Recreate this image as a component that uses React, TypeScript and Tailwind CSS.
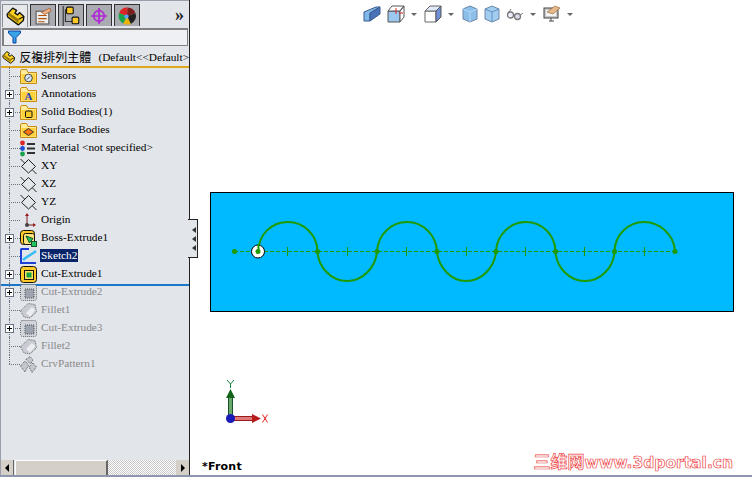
import type { ReactNode } from 'react'

const MONO = "font-['Liberation_Serif','Noto_Sans_CJK_TC',serif]"

// Yellow folder used by most tree rows
function Folder({ children }: { children?: ReactNode }) {
  return (
    <svg width="17" height="17" viewBox="0 0 17 17">
      <path d="M0.5 3 L0.5 15.5 L16.5 15.5 L16.5 4.5 L8 4.5 L6.5 1.5 L1.5 1.5 Z" fill="#ffeb99" stroke="#c98a10" />
      <path d="M1.5 6 H15.5 V14.5 H1.5 Z" fill="#ffd23c" />
      {children}
    </svg>
  )
}

function PartIcon({ size = 17 }: { size?: number }) {
  return (
    <svg width={size} height={size} viewBox="0 0 17 17">
      <path d="M1 6.5 L6 1 L9.5 3 L8 5.5 L10.5 7 L12 5 L16 8.5 L15.5 12 L11 16 L1.5 9 Z" fill="#ffd21f" stroke="#111" strokeWidth="1.2" strokeLinejoin="round" />
      <path d="M1.5 7 L11 14.5 L11.5 11 L2.5 5 Z" fill="#9a7a08" />
      <path d="M11.5 11 L16 8.5" stroke="#111" />
    </svg>
  )
}

function PlaneIcon() {
  return (
    <svg width="17" height="17" viewBox="0 0 17 17">
      <path d="M8.5 1.5 L15.5 8.5 L8.5 15 L1.5 8.5 Z M0.5 1 L4.5 5 M12.5 12 L16.5 16" fill="none" stroke="#222" />
    </svg>
  )
}

function FadedIcon({ kind }: { kind: 'cut' | 'fillet' | 'pattern' }) {
  if (kind === 'cut') {
    return (
      <svg width="17" height="17" viewBox="0 0 17 17">
        <rect x="0.5" y="0.5" width="16" height="16" rx="2" fill="#d1d5db" stroke="#666" strokeDasharray="1 1" />
        <rect x="5" y="5" width="9" height="9" fill="#9ca3af" stroke="#555" strokeDasharray="1 1" />
      </svg>
    )
  }
  if (kind === 'fillet') {
    return (
      <svg width="17" height="17" viewBox="0 0 17 17">
        <path d="M0.5 9 L8 1.5 L15 2.5 L16.5 10 L10 16 L4 15 Z" fill="#c9ccd2" stroke="#666" strokeDasharray="1 1" />
        <path d="M6 11 L12 5 L15.5 8 L10 14.5 Z" fill="#eceef1" />
      </svg>
    )
  }
  return (
    <svg width="17" height="17" viewBox="0 0 17 17">
      <path d="M0.5 10 L5 5 L8.5 9 L5 16 Z M6 3.5 L10 0.5 L13 4 L10.5 8 Z M9 11 L13 7 L16.5 11 L12 16.5 Z" fill="#c4c8ce" stroke="#555" strokeDasharray="1 1" />
    </svg>
  )
}

type Row = { label: string; icon: ReactNode; plus?: boolean; faded?: boolean; selected?: boolean }

const rowsAbove: Row[] = [
  { label: 'Sensors', icon: <Folder><circle cx="8.5" cy="10" r="3.8" fill="#dbeafe" stroke="#444" /><path d="M7 11.5 L10 8.5" stroke="#333" /></Folder> },
  { label: 'Annotations', plus: true, icon: <Folder><text x="8.5" y="14" textAnchor="middle" fontSize="11" fontWeight="700" fill="#1d3fbf" fontFamily="Liberation Serif">A</text></Folder> },
  { label: 'Solid Bodies(1)', plus: true, icon: <Folder><rect x="5.5" y="7" width="6.5" height="6.5" rx="1" fill="#ffc928" stroke="#111" /></Folder> },
  { label: 'Surface Bodies', icon: <Folder><path d="M3.5 10 L8.5 6.5 L13.5 10 L8.5 13.5 Z" fill="#f97316" stroke="#333" /></Folder> },
  {
    label: 'Material <not specified>',
    icon: (
      <svg width="17" height="17" viewBox="0 0 17 17">
        <circle cx="2.5" cy="3" r="2.4" fill="#dc2626" />
        <circle cx="2.5" cy="8.5" r="2.4" fill="#1d4ed8" />
        <circle cx="2.5" cy="14" r="2.4" fill="#16a34a" />
        <path d="M7 4 H15 M7 8.5 H15 M7 13 H15" stroke="#333" strokeWidth="2" />
      </svg>
    ),
  },
  { label: 'XY', icon: <PlaneIcon /> },
  { label: 'XZ', icon: <PlaneIcon /> },
  { label: 'YZ', icon: <PlaneIcon /> },
  {
    label: 'Origin',
    icon: (
      <svg width="17" height="17" viewBox="0 0 17 17">
        <path d="M7 13 V3 M7 13 H15" stroke="#7f1d1d" />
        <path d="M5 4 L7 1 L9 4 Z M13 11 L16 13 L13 15 Z" fill="#991b1b" />
        <circle cx="7" cy="13" r="2" fill="#444" />
      </svg>
    ),
  },
  {
    label: 'Boss-Extrude1',
    plus: true,
    icon: (
      <svg width="17" height="17" viewBox="0 0 17 17">
        <rect x="0.5" y="0.5" width="14" height="14" rx="3" fill="#ffc928" stroke="#111" />
        <rect x="3.5" y="3.5" width="11" height="11" rx="2" fill="#ffe27a" stroke="#111" />
        <path d="M6 6 L13 8.5 L9.5 13 Z" fill="#22c55e" stroke="#14532d" />
        <rect x="11.5" y="11.5" width="5" height="5" fill="#22c55e" stroke="#14532d" />
      </svg>
    ),
  },
  {
    label: 'Sketch2',
    selected: true,
    icon: (
      <svg width="17" height="17" viewBox="0 0 17 17">
        <path d="M0.5 1 H9" stroke="#1d3fd8" strokeWidth="2" />
        <path d="M1 1 V15 H16" fill="none" stroke="#1d3fd8" strokeWidth="2" />
        <path d="M3 12 C6 9 11 7 16 3" fill="none" stroke="#38bdf8" strokeWidth="2.5" />
      </svg>
    ),
  },
  {
    label: 'Cut-Extrude1',
    plus: true,
    icon: (
      <svg width="17" height="17" viewBox="0 0 17 17">
        <rect x="0.5" y="0.5" width="16" height="16" rx="3" fill="#ffc928" stroke="#111" />
        <rect x="4.5" y="4.5" width="9" height="9" fill="#ffe25a" stroke="#111" />
        <rect x="6.5" y="6.5" width="5" height="5" fill="#16a34a" />
      </svg>
    ),
  },
]

const rowsBelow: Row[] = [
  { label: 'Cut-Extrude2', plus: true, faded: true, icon: <FadedIcon kind="cut" /> },
  { label: 'Fillet1', faded: true, icon: <FadedIcon kind="fillet" /> },
  { label: 'Cut-Extrude3', plus: true, faded: true, icon: <FadedIcon kind="cut" /> },
  { label: 'Fillet2', faded: true, icon: <FadedIcon kind="fillet" /> },
  { label: 'CrvPattern1', faded: true, icon: <FadedIcon kind="pattern" /> },
]

function TreeRow({ row, last }: { row: Row; last?: boolean }) {
  return (
    <div className="relative flex h-[18px] items-center pl-[19px]">
      {/* dotted tree guides */}
      <span className={`absolute left-[8px] top-0 w-0 border-l border-dotted border-gray-500 ${last ? 'h-[9px]' : 'h-[18px]'}`} />
      <span className="absolute left-[8px] top-[9px] h-0 w-[11px] border-t border-dotted border-gray-500" />
      {row.plus && (
        <span className="absolute left-[4px] top-[5px] flex h-[9px] w-[9px] items-center justify-center border border-gray-500 bg-white text-black">
          <span className="absolute h-px w-[5px] bg-black" />
          <span className="absolute h-[5px] w-px bg-black" />
        </span>
      )}
      <span className="flex w-[17px] shrink-0 items-center justify-center">{row.icon}</span>
      <span
        className={`ml-[3px] mb-px px-px text-[11.3px] leading-[13px] whitespace-nowrap ${
          row.selected ? 'bg-[#0a246a] text-white' : row.faded ? 'text-[#8a8a8a]' : 'text-black'
        }`}
      >
        {row.label}
      </span>
    </div>
  )
}

function Tab({ active, children }: { active?: boolean; children: ReactNode }) {
  return (
    <div
      className={`flex w-[26px] items-center justify-center border border-b-0 ${
        active ? 'h-[23px] border-[#8a8d94] bg-[#e6e8ec]' : 'h-[22px] border-[#333] bg-[#a9abb0]'
      }`}
    >
      {children}
    </div>
  )
}

function Sidebar() {
  return (
    <aside className="relative flex h-full w-[190px] shrink-0 flex-col border-l border-r border-l-[#9a9eaa] border-r-[#222] bg-[#e2e5ea]">
      <div className="flex h-[28px] items-start gap-[2px] border-t border-[#9a9eaa] pt-[3px] pl-px">
        <Tab active><PartIcon size={19} /></Tab>
        <Tab>
          <svg width="18" height="18" viewBox="0 0 17 17">
            <rect x="2" y="4" width="12" height="12" fill="#eee" stroke="#555" />
            <path d="M4 8 H12 M4 11 H12 M4 14 H10" stroke="#b45309" />
            <path d="M7 5 L15 1 L16 4 L10 7 Z" fill="#f2b488" stroke="#92400e" strokeWidth="0.6" />
          </svg>
        </Tab>
        <Tab>
          <svg width="20" height="20" viewBox="0 0 18 18">
            <path d="M2 0 V18 M4 3 V14 H10" fill="none" stroke="#333" />
            <rect x="5" y="1" width="6" height="6" rx="1" fill="#ffc928" stroke="#111" />
            <rect x="10" y="10" width="6" height="6" rx="1" fill="#ffc928" stroke="#111" />
          </svg>
        </Tab>
        <Tab>
          <svg width="18" height="18" viewBox="0 0 17 17">
            <circle cx="8.5" cy="8.5" r="5" fill="none" stroke="#b026d6" strokeWidth="1.6" />
            <path d="M8.5 1 V16 M1 8.5 H16" stroke="#b026d6" strokeWidth="1.6" />
          </svg>
        </Tab>
        <Tab>
          <svg width="18" height="18" viewBox="0 0 17 17">
            <path d="M8.5 8.5 L1 6 A8 8 0 0 1 9 0.5 Z" fill="#dc2626" />
            <path d="M8.5 8.5 L9 0.5 A8 8 0 0 1 16.5 6 Z" fill="#7f1d1d" />
            <path d="M8.5 8.5 L16.5 6 A8 8 0 0 1 12 16 Z" fill="#222" />
            <path d="M8.5 8.5 L12 16 A8 8 0 0 1 5 15.5 Z" fill="#eab308" />
            <path d="M8.5 8.5 L5 15.5 A8 8 0 0 1 1 6 Z" fill="#16a34a" />
            <circle cx="8" cy="9" r="2" fill="#60a5fa" />
          </svg>
        </Tab>
        <span className="ml-auto mr-[5px] mt-[1px] text-[18px] leading-[20px] font-bold text-[#222]">»</span>
      </div>

      <div className="mx-px flex h-[18px] items-center border border-[#808080] bg-[#eef0f3] pl-[5px] shadow-[inset_1px_1px_0_#808080]">
        <svg width="13" height="14" viewBox="0 0 13 14">
          <path d="M0.5 1 H12.5 V3 L8 7.5 V13 H5 V7.5 L0.5 3 Z" fill="#38a4e8" stroke="#0b3fa0" />
        </svg>
      </div>

      <div className="mt-[3px] -mb-px flex h-[19px] items-center border-b-2 border-[#e0a81c] pl-px">
        <PartIcon />
        <span className="ml-[4px] text-[12px] whitespace-nowrap text-black">反複排列主體</span>
        <span className="ml-[7px] text-[11.3px] whitespace-nowrap text-black">(Default&lt;&lt;Default&gt;</span>
      </div>

      <div className="flex-1">
        {rowsAbove.map((r) => <TreeRow key={r.label} row={r} />)}
        <div className="relative h-0">
          <div className="absolute inset-x-0 top-px h-[2px] bg-[#1b77c9]" />
        </div>
        {rowsBelow.map((r, i) => <TreeRow key={r.label} row={r} last={i === rowsBelow.length - 1} />)}
      </div>

      {/* horizontal scrollbar */}
      <div className="flex h-[15px] items-stretch">
        <div className="flex w-[13px] items-center justify-center border-r border-[#666] bg-[#d4d0c8]">
          <span className="h-0 w-0 border-y-4 border-r-4 border-y-transparent border-r-black" />
        </div>
        <div className="ml-px w-[93px] border-t border-l border-r-2 border-t-white border-l-white border-r-[#666] bg-[#d4d0c8]" />
        <div className="flex-1 bg-[#d6d6d6] bg-[repeating-conic-gradient(#ffffff_0_25%,#c8c8c8_0_50%)] bg-[length:2px_2px]" />
        <div className="flex w-[13px] items-center justify-center bg-[#d4d0c8]">
          <span className="h-0 w-0 border-y-4 border-l-4 border-y-transparent border-l-black" />
        </div>
      </div>

      {/* collapse handle on the splitter */}
      <div className="absolute -right-[9px] top-[219px] flex h-[39px] w-[10px] flex-col items-center justify-center gap-[3px] border border-l-0 border-[#222] bg-[#e2e5ea] pl-[2px]">
        <span className="h-0 w-0 border-y-[3px] border-r-[4px] border-y-transparent border-r-[#333]" />
        <span className="h-0 w-0 border-y-[3px] border-r-[4px] border-y-transparent border-r-[#333]" />
        <span className="h-0 w-0 border-y-[3px] border-r-[4px] border-y-transparent border-r-[#333]" />
      </div>
    </aside>
  )
}

function Caret() {
  return <span className="h-0 w-0 border-x-[3px] border-t-[3px] border-x-transparent border-t-[#666]" />
}

function Toolbar() {
  return (
    <div className="ml-[173px] flex h-[28px] items-center gap-[6px]">
      <svg width="18" height="18" viewBox="0 0 18 18">
        <path d="M1 7 L13 2 L17 2 L7 8 V16 L1 16 Z" fill="#7fb8ea" stroke="#3a5a8c" />
        <path d="M7 8 L17 2 V9 L7 16 Z" fill="#4a72b8" stroke="#3a5a8c" />
      </svg>
      <svg width="18" height="18" viewBox="0 0 18 18">
        <path d="M1 6 H13 V17 H1 Z" fill="#9cc8f0" stroke="#555" />
        <path d="M1 6 L5 1 H17 L13 6 Z M13 6 L17 1 V12 L13 17 Z" fill="#fff" stroke="#555" />
        <path d="M9 3 V9 M12 8 H16" stroke="#dc2626" />
      </svg>
      <Caret />
      <svg className="ml-px" width="18" height="18" viewBox="0 0 18 18">
        <path d="M1 6 H12 V17 H1 Z" fill="#fff" stroke="#666" />
        <path d="M1 6 L6 1 H17 L12 6 Z" fill="#dfe9f7" stroke="#666" />
        <path d="M12 6 L17 1 V12 L12 17 Z" fill="#6f8fd8" stroke="#555" />
      </svg>
      <Caret />
      <svg className="ml-[2px]" width="16" height="18" viewBox="0 0 16 18">
        <path d="M8 1 L15 4 V14 L8 17 L1 14 V4 Z" fill="#8cc0ea" stroke="#6a86a8" />
        <path d="M1 4 L8 7 L15 4 M8 7 V17" fill="none" stroke="#b8d8f4" />
      </svg>
      <svg width="16" height="18" viewBox="0 0 16 18">
        <path d="M8 1 L15 4 V14 L8 17 L1 14 V4 Z" fill="#a2cdef" stroke="#6a86a8" />
        <path d="M1 4 L8 7 L15 4 M8 7 V17" fill="none" stroke="#5f8fc8" />
      </svg>
      <svg width="18" height="18" viewBox="0 0 18 18">
        <circle cx="4.5" cy="10" r="3" fill="#eef" stroke="#777" strokeWidth="1.3" />
        <circle cx="11.5" cy="11.5" r="3" fill="#dde" stroke="#777" strokeWidth="1.3" />
        <path d="M7.5 10 L8.5 10.5 M14.5 10 L17 8 M3 7 L5 4" fill="none" stroke="#777" />
      </svg>
      <Caret />
      <svg className="ml-px" width="18" height="18" viewBox="0 0 18 18">
        <rect x="1" y="3" width="14" height="10" fill="#c8c8c8" stroke="#444" />
        <rect x="3" y="5" width="10" height="6" fill="#f3f4f6" />
        <path d="M6 16 H11 M8 13 V16" stroke="#444" />
        <path d="M4 7 L12 1 L17 3 L10 9 Z" fill="#e6b98a" stroke="#92602c" strokeWidth="0.6" />
      </svg>
      <Caret />
    </div>
  )
}

function SketchPart() {
  // profile of five half circles, drawn over the blue extrusion
  return (
    <div className="ml-[20px] mt-[164px] h-[120px] w-[524px] border border-black bg-[#00baff]">
      <svg width="522" height="118" viewBox="0 0 522 118" shapeRendering="crispEdges">
        <g transform="translate(-211 -193)">
          <path d="M234 251.5 H675" stroke="#1f9a00" strokeDasharray="4 2" fill="none" />
          <path d="M287.5 247 V256 M347.5 247 V256 M406.5 247 V256 M466.5 247 V256 M525.5 247 V256 M584.5 247 V256 M644.5 247 V256" stroke="#1f9a00" />
        </g>
      </svg>
      <svg className="-mt-[118px]" width="522" height="118" viewBox="0 0 522 118">
        <g transform="translate(-211 -193)">
          <path d="M258.5 251 C258.5 234 272 222 288 222 C304 222 317 235 317.5 251 C318 267 331 281 347 281 C363 281 376 267 377 251 C378 235 391 222 407 222 C423 222 436 235 437 251 C438 267 451 281 466 281 C482 281 495 267 496 251 C497 235 510 222 526 222 C542 222 555 235 555.5 251 C556 267 569 281 585 281 C601 281 614 267 614.5 251 C615 235 628 222 644 222 C660 222 674 235 675 251" fill="none" stroke="#1f9a00" strokeWidth="2" />
          <circle cx="258" cy="251.5" r="6.5" fill="#fff" stroke="#000" />
          <path d="M258.5 251 V244" stroke="#1f9a00" strokeWidth="2" />
          {[234.5, 258, 317.5, 377, 437, 496, 555.5, 614.5, 675].map((x) => (
            <circle key={x} cx={x} cy={251.5} r="2.5" fill="#1f9a00" />
          ))}
        </g>
      </svg>
    </div>
  )
}

function Triad() {
  return (
    <svg className="absolute left-[30px] top-[376px]" width="60" height="56" viewBox="0 0 60 56">
      <path d="M7 4 L10.5 8 L14 4 M10.5 8 V12" fill="none" stroke="#15803d" />
      <rect x="8.5" y="21" width="4" height="20" fill="#6aa86a" stroke="#14532d" />
      <path d="M10.5 13 L15 22 H6 Z" fill="#14631a" />
      <rect x="14" y="40.5" width="19" height="4" fill="#e07a7a" stroke="#991b1b" />
      <path d="M41 42.5 L32 38 V47 Z" fill="#b91c1c" />
      <path d="M42.5 38.5 L47.5 46.5 M47.5 38.5 L42.5 46.5" stroke="#ef2020" />
      <circle cx="10.5" cy="42.5" r="4.5" fill="#1a1ab8" />
    </svg>
  )
}

export default function App() {
  return (
    <div className={`flex h-[477px] w-[752px] overflow-hidden border-b-2 border-[#8d96ad] bg-white ${MONO}`}>
      <Sidebar />
      <main className="relative flex-1">
        <Toolbar />
        <SketchPart />
        <Triad />
        <div className="absolute bottom-[1px] left-[12px] font-['DejaVu_Sans',sans-serif] text-[11px] leading-[14px] font-bold tracking-[0.2px] text-black">*Front</div>
        <div className="absolute bottom-[4px] right-[19px] flex items-baseline font-['DejaVu_Sans','Noto_Sans_CJK_SC',sans-serif] leading-[16px] font-bold whitespace-nowrap text-white [-webkit-text-stroke:0.7px_#ee4444]">
          <span className="text-[17px]">三维网</span>
          <span className="text-[15.5px]">www.3dportal.cn</span>
        </div>
      </main>
    </div>
  )
}
